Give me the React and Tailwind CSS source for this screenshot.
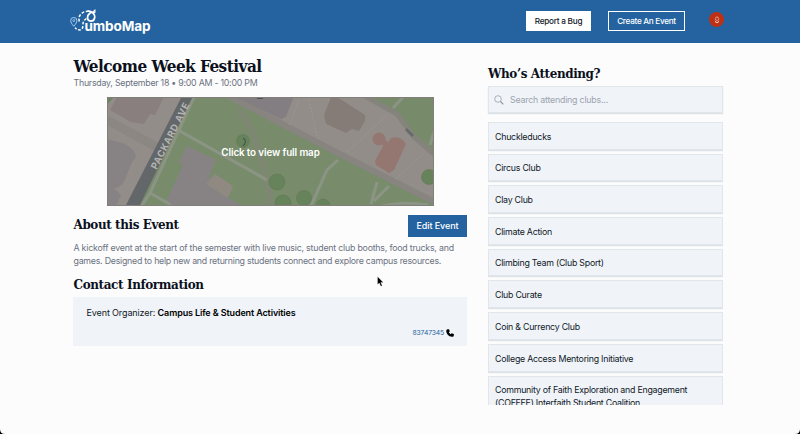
import React from "react";

const clubs = [
  "Chuckleducks",
  "Circus Club",
  "Clay Club",
  "Climate Action",
  "Climbing Team (Club Sport)",
  "Club Curate",
  "Coin & Currency Club",
  "College Access Mentoring Initiative",
  "Community of Faith Exploration and Engagement (COFFEE) Interfaith Student Coalition",
];

const serif = "font-['DejaVu_Serif_Condensed','DejaVu_Serif',serif] font-bold text-[#0b101c] whitespace-nowrap";

function Logo() {
  return (
    <div className="relative h-[26px] w-[82px]">
      <svg className="absolute inset-0" width="82" height="26" viewBox="0 0 82 26" fill="none" stroke="#fff">
        <path d="M9.3 12.5C7.5 6 13 1.8 19 2.2" strokeWidth="1.5" strokeDasharray="2.8 1.7" />
        <path d="M17.5 2.2C21.5 1.5 25.4 5 24.6 9C23.6 13.5 17.5 13 17.5 8.8C17.5 5 21 2.2 25.5 3.2" strokeWidth="1.7" />
        <path d="M23.5 2.5L25.5 .8" strokeWidth="1.2" />
        <path d="M16.4 9.5C13 12 12.8 14 12.9 17C12.8 21 9 22.5 5 18.8" strokeWidth="1.5" strokeDasharray="2.8 1.6" />
        <path d="M3.8 17.3C1.7 14.8.7 13.2.7 11.6a3.1 3.1 0 0 1 6.2 0c0 1.6-1 3.2-3.1 5.7Z" stroke="#a9d0f2" strokeWidth="1" />
        <circle cx="3.8" cy="11.6" r="1" stroke="#a9d0f2" strokeWidth=".8" />
      </svg>
      <span className="absolute left-[14.5px] top-[8px] text-[13.6px] font-bold leading-[18px] tracking-[-0.15px] text-white">umboMap</span>
    </div>
  );
}

function CampusMap() {
  return (
    <svg width="327" height="109" viewBox="0 0 327 109" className="block">
      <rect width="327" height="109" fill="#938d89" />
      <path d="M0 0H7L0 8Z" fill="#6b8760" />
      <path d="M10 0L3 13L24 25L37 27L43 17L48 18L57 0Z" fill="#887f7e" />
      <path d="M0 23L57 54" stroke="#8b8783" strokeWidth="9" />
      <path d="M0 42L18 47Q29 53 29 60Q25 64 23 70L17 85Q13 91 7 91L14 98L9 109H0Z" fill="#878385" />
      <path d="M85 0H120L158 18L231 56L327 106V109H30Z" fill="#788c6b" />
      <path d="M118 -3L158 18L231 56L328 105" stroke="#888581" strokeWidth="6" fill="none" />
      <path d="M126 -1H187L179 20L174 22Z" fill="#827e81" />
      <path d="M224 0H230L258 18L258 24L252 34L245 32L239 36L219 27L217 18Z" fill="#857c78" />
      <path d="M260 -1H327V57L308 40L291 18Z" fill="#778b6b" />
      <path d="M258 -1L290 17L307 40L328 58" stroke="#84847d" strokeWidth="5" fill="none" />
      <path d="M131 12Q154 39 164 109" stroke="#7d8772" strokeWidth="7" fill="none" />
      <g stroke="#8c9585" strokeWidth="3" fill="none">
        <path d="M71 33L160 83" />
        <path d="M88 -2L72 33L43 96L34 110M43 96L66 109" />
        <path d="M231 63L220 73L204 109" />
        <path d="M270 85L264 107M282 89L267 104" />
        <path d="M286 11L297 -1M327 35L323 48" />
        <path d="M275 109Q297 104 321 108" />
      </g>
      <path d="M80 49L109 63L102 80L121 101L135 109H66L60 103L76 68L72 65Z" fill="#878385" />
      <path d="M108 77L126 89L121 101L99 87Z" fill="#8f8982" />
      <path d="M75 -1H86L32 110H18Z" fill="#63676a" />
      <g fill="#957771">
        <circle cx="272" cy="42" r="6.5" />
        <path d="M274 40L281 45L284 41Q294 38 299 47L287 73L282 76L269 68L268 64L276 49Z" />
      </g>
      <path d="M192 3L182 29M201 0L211 42M240 55L280 18M289 82L316 57" stroke="#9e9892" strokeWidth="1" strokeDasharray="2 1.5" fill="none" />
      <g fill="#67835b" stroke="#607b54" strokeWidth=".6">
        <circle cx="136" cy="44" r="6.5" />
        <circle cx="170" cy="85" r="8" />
        <circle cx="197" cy="101" r="7.5" />
        <circle cx="176" cy="106" r="8" />
        <circle cx="216" cy="109" r="7" />
        <circle cx="322" cy="80" r="7.5" />
      </g>
      <path d="M136 41Q141 44 136 49" stroke="#475551" strokeWidth="1.2" fill="none" />
      <path d="M299 32L306 39" stroke="#666b6a" strokeWidth="3" />
      <ellipse cx="153" cy="0" rx="4" ry="2" fill="#4c5053" />
      <text transform="translate(49.5 73) rotate(-63)" fontFamily="Inter, sans-serif" fontSize="9.5" fontWeight="700" fill="#b5b4b1" textLength="73">PACKARD AVE</text>
      <rect x=".5" y=".5" width="326" height="108" fill="none" stroke="#827f7b" />
    </svg>
  );
}

export default function App() {
  return (
    <div className="relative h-[434px] w-[800px] overflow-hidden bg-[#fcfcfd] font-['Inter',sans-serif] text-[#111827]">
      <header className="flex h-[43px] items-start bg-[#2463a0] pl-[70px]">
        <div className="mt-[9px]"><Logo /></div>
        <button className="ml-[374px] mt-[11px] h-5 w-[65px] bg-white text-[8.2px] font-medium tracking-[-0.25px] whitespace-nowrap">Report a Bug</button>
        <button className="ml-[17px] mt-[11px] h-5 w-[77px] border border-white text-[8.2px] font-medium tracking-[-0.3px] whitespace-nowrap text-white">Create An Event</button>
        <div className="ml-6 mt-3 flex size-[15px] items-center justify-center rounded-full bg-[#bd3013]">
          <svg width="6" height="8" viewBox="0 0 7 9" fill="none" stroke="#f3ddd7" strokeWidth="1"><circle cx="3.5" cy="3" r="2" strokeDasharray="1.6 .6" /><path d="M1.6 5.4L2.2 7.5H4.8L5.4 5.4" /></svg>
        </div>
      </header>
      <main className="flex pl-[73px]">
        <section className="w-[394px] pt-[14px]">
          <h1 className={`${serif} pl-[0.5px] text-[17px] leading-[19px] tracking-[-0.52px]`}>Welcome Week Festival</h1>
          <p className="mt-[1px] pl-[0.5px] text-[8.8px] leading-3 tracking-[-0.24px] whitespace-nowrap text-[#6b7280]">Thursday, September 18 • 9:00 AM - 10:00 PM</p>
          <div className="relative ml-[34px] mt-2 h-[109px] w-[327px]">
            <CampusMap />
            <div className="absolute inset-0 flex items-center justify-center pt-[3px] text-[9.8px] font-semibold tracking-[-0.1px] text-white">Click to view full map</div>
          </div>
          <div className="mt-[9px] flex h-[22px] justify-between">
            <h2 className={`${serif} pl-[0.5px] text-[13.3px] leading-[19px] tracking-[-0.4px]`}>About this Event</h2>
            <button className="h-[22px] w-[59px] bg-[#2463a0] text-[9px] font-medium tracking-[-0.1px] text-white">Edit Event</button>
          </div>
          <p className="mt-1 pl-[0.5px] text-[8.8px] leading-[13px] tracking-[-0.21px] whitespace-nowrap text-[#6b7280]">
            A kickoff event at the start of the semester with live music, student club booths, food trucks, and<br />
            <span className="tracking-[-0.24px]">games. Designed to help new and returning students connect and explore campus resources.</span>
          </p>
          <h2 className={`${serif} mt-[9px] pl-[0.5px] text-[13.3px] leading-[18px] tracking-[-0.38px]`}>Contact Information</h2>
          <div className="mt-[3px] h-[49px] bg-[#f0f4f8] px-[13px] pt-[10px]">
            <p className="pl-[0.5px] text-[9px] leading-3 tracking-[-0.12px] whitespace-nowrap">Event Organizer: <span className="font-semibold text-black">Campus Life &amp; Student Activities</span></p>
            <div className="mt-[9px] flex items-center justify-end gap-[2px] text-[6.8px] leading-[10px] tracking-[-0.15px] text-[#2463a0]">
              <span>83747345</span>
              <svg width="8" height="8" viewBox="0 0 24 24" fill="#000"><path d="M5 1L9 .5L11.5 7L8.5 10Q10.5 14 14 15.5L17 12.5L23.5 15V20Q22 23.5 18 23.5Q2 21 .5 6Q.5 2 5 1Z" /></svg>
            </div>
          </div>
        </section>
        <aside className="ml-[21px] w-[235px] pt-[22px]">
          <h2 className={`${serif} text-[13.3px] leading-[18px] tracking-[-0.4px]`}>Who’s Attending?</h2>
          <div className="mt-[3px] flex h-[27px] items-center border border-[#e1e6eb] bg-[#f0f4f8] pl-[5px] shadow-[0_1px_1px_#dde2e7]">
            <svg width="10" height="10" viewBox="0 0 10 10" fill="none" stroke="#8d939b" strokeWidth=".7"><circle cx="4" cy="4" r="3.3" /><path d="M6.5 6.5L9.3 9.3" strokeWidth="1.1" /></svg>
            <span className="ml-[6px] pt-px text-[8.8px] tracking-[-0.2px] text-[#9ca3af]">Search attending clubs...</span>
          </div>
          <ul className="mt-[9px] flex h-[283px] flex-col gap-[4px] overflow-hidden">
            {clubs.map((c) => (
              <li key={c} className="min-h-[27.6px] shrink-0 border border-[#e1e6eb] bg-[#f0f4f8] px-[6px] pt-[6.7px] pb-[6px] text-[8.8px] leading-[13px] tracking-[-0.24px] shadow-[0_1px_1px_#dde2e7]">{c}</li>
            ))}
          </ul>
        </aside>
      </main>
      <svg className="absolute left-[377px] top-[276px]" width="7" height="11" viewBox="0 0 7 11"><path d="M.5.5V8.5L2.3 7L3.8 10.3L5.2 9.7L3.8 6.5H6.3Z" fill="#000" stroke="#fff" strokeWidth=".3" /></svg>
      <svg className="absolute bottom-0 left-0" width="5" height="5"><path d="M0 0Q0 5 5 5H0Z" /></svg>
      <svg className="absolute bottom-0 right-0" width="5" height="5"><path d="M5 0Q5 5 0 5H5Z" /></svg>
    </div>
  );
}
